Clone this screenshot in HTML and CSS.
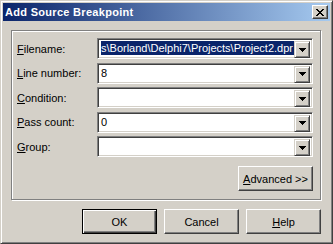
FILE: index.html
```html
<!DOCTYPE html>
<html>
<head>
    <title>Add Source Breakpoint</title>
    <link rel="stylesheet" href="styles.css">
</head>
<body>
<div class="window">
    <div class="titlebar">
        <span class="title">Add Source Breakpoint</span>
        <div class="close-btn">
            <svg width="8" height="7" viewBox="0 0 8 7" shape-rendering="crispEdges"><path d="M0 0h2v1H0zM6 0h2v1H6zM1 1h2v1H1zM5 1h2v1H5zM2 2h4v1H2zM3 3h2v1H3zM2 4h4v1H2zM1 5h2v1H1zM5 5h2v1H5zM0 6h2v1H0zM6 6h2v1H6z" fill="#000"/></svg>
        </div>
    </div>
    <div class="client">
        <div class="group">
            <div class="row">
                <label><u>F</u>ilename:</label>
                <div class="combo">
                    <div class="combo-text"><span class="selected">s\Borland\Delphi7\Projects\Project2.dpr</span></div>
                    <div class="drop-btn"><svg width="7" height="4" viewBox="0 0 7 4" shape-rendering="crispEdges"><path d="M0 0h7v1H0zM1 1h5v1H1zM2 2h3v1H2zM3 3h1v1H3z" fill="#000"/></svg></div>
                </div>
            </div>
            <div class="row">
                <label><u>L</u>ine number:</label>
                <div class="combo">
                    <div class="combo-text">8</div>
                    <div class="drop-btn"><svg width="7" height="4" viewBox="0 0 7 4" shape-rendering="crispEdges"><path d="M0 0h7v1H0zM1 1h5v1H1zM2 2h3v1H2zM3 3h1v1H3z" fill="#000"/></svg></div>
                </div>
            </div>
            <div class="row">
                <label><u>C</u>ondition:</label>
                <div class="combo">
                    <div class="combo-text"></div>
                    <div class="drop-btn"><svg width="7" height="4" viewBox="0 0 7 4" shape-rendering="crispEdges"><path d="M0 0h7v1H0zM1 1h5v1H1zM2 2h3v1H2zM3 3h1v1H3z" fill="#000"/></svg></div>
                </div>
            </div>
            <div class="row">
                <label><u>P</u>ass count:</label>
                <div class="combo">
                    <div class="combo-text">0</div>
                    <div class="drop-btn"><svg width="7" height="4" viewBox="0 0 7 4" shape-rendering="crispEdges"><path d="M0 0h7v1H0zM1 1h5v1H1zM2 2h3v1H2zM3 3h1v1H3z" fill="#000"/></svg></div>
                </div>
            </div>
            <div class="row">
                <label><u>G</u>roup:</label>
                <div class="combo">
                    <div class="combo-text"></div>
                    <div class="drop-btn"><svg width="7" height="4" viewBox="0 0 7 4" shape-rendering="crispEdges"><path d="M0 0h7v1H0zM1 1h5v1H1zM2 2h3v1H2zM3 3h1v1H3z" fill="#000"/></svg></div>
                </div>
            </div>
            <div class="adv-row">
                <div class="btn"><u>A</u>dvanced &gt;&gt;</div>
            </div>
        </div>
        <div class="buttons">
            <div class="btn default">OK</div>
            <div class="btn">Cancel</div>
            <div class="btn"><u>H</u>elp</div>
        </div>
    </div>
</div>
</body>
</html>
```

FILE: styles.css
```css
body {
    margin: 0;
    padding: 0;
    background: #d4d0c8;
    font-family: "Liberation Sans", Arial, sans-serif;
    font-size: 11px;
    color: #000;
}
.window {
    width: 333px;
    height: 244px;
    box-sizing: border-box;
    background: #d4d0c8;
    border: 1px solid;
    border-color: #d4d0c8 #404040 #404040 #d4d0c8;
    box-shadow: inset 1px 1px #fff, inset -1px -1px #808080;
    padding: 2px;
}
.titlebar {
    height: 18px;
    display: flex;
    align-items: center;
    justify-content: space-between;
    background: linear-gradient(to right, #0a246a, #a6caf0);
    padding: 0 2px 0 2px;
}
.title {
    color: #fff;
    font-weight: bold;
    font-size: 11px;
    letter-spacing: 0.3px;
}
.close-btn {
    width: 16px;
    height: 14px;
    box-sizing: border-box;
    background: #d4d0c8;
    border: 1px solid;
    border-color: #fff #404040 #404040 #fff;
    box-shadow: inset -1px -1px #808080;
    display: flex;
    align-items: center;
    justify-content: center;
}
.client {
    padding: 9px 9px 0 8px;
}
.group {
    border: 1px solid #808080;
    box-shadow: 1px 1px 0 #fff, inset 1px 1px 0 #fff;
    padding: 7px 7px 8px 5px;
    display: flex;
    flex-direction: column;
    gap: 3.5px;
}
.row {
    display: flex;
    align-items: center;
    height: 21px;
}
.row label {
    width: 80px;
}
.combo {
    width: 216px;
    height: 21px;
    box-sizing: border-box;
    background: #fff;
    border: 1px solid;
    border-color: #808080 #fff #fff #808080;
    box-shadow: inset 1px 1px #404040, inset -1px -1px #d4d0c8;
    padding: 2px;
    display: flex;
}
.combo-text {
    flex: 1;
    overflow: hidden;
    white-space: nowrap;
    line-height: 15px;
    padding-left: 1px;
}
.selected {
    background: #0a246a;
    color: #fff;
    padding: 1px 1px 1px 0;
}
.drop-btn {
    width: 16px;
    height: 17px;
    box-sizing: border-box;
    background: #d4d0c8;
    border: 1px solid;
    border-color: #d4d0c8 #404040 #404040 #d4d0c8;
    box-shadow: inset 1px 1px #fff, inset -1px -1px #808080;
    display: flex;
    align-items: center;
    justify-content: center;
}
.adv-row {
    display: flex;
    justify-content: flex-end;
    margin-top: 5.5px;
}
.btn {
    width: 75px;
    height: 25px;
    box-sizing: border-box;
    border: 1px solid;
    border-color: #fff #404040 #404040 #fff;
    box-shadow: inset -1px -1px #808080;
    display: flex;
    align-items: center;
    justify-content: center;
}
.btn.default {
    border-color: #000;
    box-shadow: inset 1px 1px #fff, inset -1px -1px #404040, inset -2px -2px #808080;
}
.buttons {
    display: flex;
    justify-content: flex-end;
    gap: 7px;
    margin-top: 9px;
}
```
